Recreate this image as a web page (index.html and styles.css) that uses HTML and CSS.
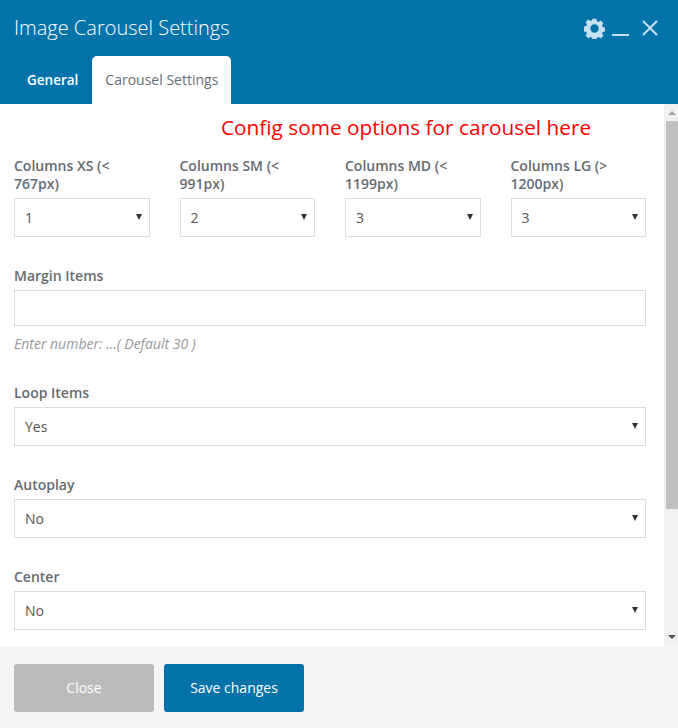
FILE: index.html
```html
<!DOCTYPE html>
<html>
<head>
<meta charset="UTF-8">
<title>Image Carousel Settings</title>
<link rel="stylesheet" href="styles.css">
</head>
<body>
	<div class="modal">
		<!-- header -->
		<div class="modal-head">
			<div class="title-row">
				<h4 class="title">Image Carousel Settings</h4>
				<div class="head-icons">
					<svg class="icon-gear" width="21" height="21" viewBox="0 0 22 22">
						<path fill="#c5e2f0" fill-rule="evenodd" d="M9 .8h4l.6 2.6 1.6.7 2.3-1.4 2.8 2.8-1.4 2.3.7 1.6 2.6.6v4l-2.6.6-.7 1.6 1.4 2.3-2.8 2.8-2.3-1.4-1.6.7-.6 2.6H9l-.6-2.6-1.6-.7-2.3 1.4-2.8-2.8 1.4-2.3-.7-1.6-2.6-.6V9l2.6-.6.7-1.6-1.4-2.3 2.8-2.8 2.3 1.4 1.6-.7zM11 6.6a4.4 4.4 0 1 0 0 8.8 4.4 4.4 0 0 0 0-8.8z"/>
					</svg>
					<span class="icon-min"></span>
					<svg class="icon-close" width="18" height="18" viewBox="0 0 18 18">
						<path stroke="#c5e2f0" stroke-width="2" fill="none" d="M2 2l14 14M16 2L2 16"/>
					</svg>
				</div>
			</div>
			<ul class="tabs">
				<li class="tab tab-general">General</li>
				<li class="tab active">Carousel Settings</li>
			</ul>
		</div>

		<!-- body with scrollbar -->
		<div class="modal-body">
			<div class="content">
				<p class="note">Config some options for carousel here</p>

				<div class="columns">
					<div class="col">
						<label>Columns XS (&lt; 767px)</label>
						<div class="select"><span>1</span><i class="caret"></i></div>
					</div>
					<div class="col">
						<label>Columns SM (&lt; 991px)</label>
						<div class="select"><span>2</span><i class="caret"></i></div>
					</div>
					<div class="col">
						<label>Columns MD (&lt; 1199px)</label>
						<div class="select"><span>3</span><i class="caret"></i></div>
					</div>
					<div class="col">
						<label>Columns LG (&gt; 1200px)</label>
						<div class="select"><span>3</span><i class="caret"></i></div>
					</div>
				</div>

				<div class="field field-margin">
					<label>Margin Items</label>
					<input class="text-input" type="text">
					<p class="hint">Enter number: ...( Default 30 )</p>
				</div>

				<div class="field field-loop">
					<label>Loop Items</label>
					<div class="select"><span>Yes</span><i class="caret"></i></div>
				</div>

				<div class="field">
					<label>Autoplay</label>
					<div class="select"><span>No</span><i class="caret"></i></div>
				</div>

				<div class="field">
					<label>Center</label>
					<div class="select"><span>No</span><i class="caret"></i></div>
				</div>
			</div>

			<div class="scrollbar">
				<i class="arrow-up"></i>
				<div class="track"><div class="thumb"></div></div>
				<i class="arrow-down"></i>
			</div>
		</div>

		<!-- footer -->
		<div class="modal-foot">
			<button class="btn btn-close">Close</button>
			<button class="btn btn-save">Save changes</button>
		</div>
	</div>
</body>
</html>
```

FILE: styles.css
```css
html, body {
  margin: 0;
  padding: 0;
}

body {
  font-family: "Open Sans", sans-serif;
  font-size: 14px;
  color: #666b70;
  background-color: #fff;
}

.modal {
  width: 678px;
  height: 728px;
  display: flex;
  flex-direction: column;
  overflow: hidden;
}

/* header */
.modal-head {
  height: 104px;
  background-color: #0473aa;
  display: flex;
  flex-direction: column;
  justify-content: space-between;
  flex-shrink: 0;
}

.title-row {
  display: flex;
  justify-content: space-between;
  padding: 14px 19px 0 14px;
}

.title {
  margin: 0;
  font-size: 20px;
  line-height: 28px;
  font-weight: 300;
  color: #fff;
}

.head-icons {
  display: flex;
  align-items: flex-start;
}

.icon-gear {
  margin: 4px 7px 0 0;
}

.icon-min {
  width: 17px;
  height: 2px;
  margin: 20px 12px 0 0;
  background-color: #c5e2f0;
}

.icon-close {
  margin-top: 5px;
}

.tabs {
  list-style: none;
  margin: 0;
  padding: 0 0 0 14px;
  display: flex;
}

.tab {
  height: 48px;
  line-height: 48px;
  font-size: 14px;
  font-weight: 600;
  color: #fff;
  padding: 0 13px;
}

.tab-general {
  font-size: 13.5px;
  padding-right: 14px;
}

.tab.active {
  background-color: #fff;
  color: #666f78;
  font-weight: 400;
  border-radius: 5px 5px 0 0;
}

/* body */
.modal-body {
  height: 542px;
  display: flex;
  background-color: #fff;
  flex-shrink: 0;
}

.content {
  flex-grow: 1;
  padding: 0 18px 0 14px;
  overflow: hidden;
}

.note {
  margin: 10px 0 0 207px;
  font-size: 20.8px;
  line-height: 27px;
  color: #f00;
}

.columns {
  display: flex;
  gap: 30px;
  margin-top: 16px;
}

.col {
  flex: 1;
  min-width: 0;
}

label {
  display: block;
  font-weight: 600;
  line-height: 18px;
  margin-bottom: 5px;
}

.select {
  height: 39px;
  box-sizing: border-box;
  border: 1px solid #ddd;
  display: flex;
  align-items: center;
  justify-content: space-between;
  padding: 0 10px;
  color: #555;
}

.caret {
  width: 0;
  height: 0;
  border-left: 3px solid transparent;
  border-right: 3px solid transparent;
  border-top: 6px solid #333;
  margin: -2px -3px 0 0;
}

.text-input {
  display: block;
  width: 100%;
  height: 36px;
  box-sizing: border-box;
  border: 1px solid #ddd;
  padding: 0 10px;
  margin: 0;
}

.field {
  margin-top: 30px;
}

.field-loop {
  margin-top: 31px;
}

.hint {
  margin: 9px 0 0;
  font-size: 14px;
  line-height: 18px;
  font-style: italic;
  color: #999;
}

/* scrollbar */
.scrollbar {
  width: 14px;
  flex-shrink: 0;
  background-color: #f1f1f1;
  display: flex;
  flex-direction: column;
  align-items: center;
}

.arrow-up {
  width: 0;
  height: 0;
  margin: 7px 0 0 2px;
  border-left: 4px solid transparent;
  border-right: 4px solid transparent;
  border-bottom: 4px solid #a3a3a3;
}

.track {
  flex-grow: 1;
  align-self: stretch;
  padding-left: 2px;
}

.thumb {
  height: 388px;
  margin-top: 6px;
  background-color: #c1c1c1;
}

.arrow-down {
  width: 0;
  height: 0;
  margin: 0 0 7px 2px;
  border-left: 4px solid transparent;
  border-right: 4px solid transparent;
  border-top: 4px solid #505050;
}

/* footer */
.modal-foot {
  flex-grow: 1;
  background-color: #f5f5f5;
  display: flex;
  gap: 10px;
  padding: 18px 14px 0;
}

.btn {
  width: 140px;
  height: 48px;
  border: none;
  border-radius: 3px;
  padding: 0 0 2px;
  font-family: "Open Sans", sans-serif;
  font-size: 14px;
  font-weight: 500;
  color: #fff;
  cursor: pointer;
}

.btn-close {
  background-color: #bbb;
}

.btn-save {
  background-color: #0473aa;
}
```
